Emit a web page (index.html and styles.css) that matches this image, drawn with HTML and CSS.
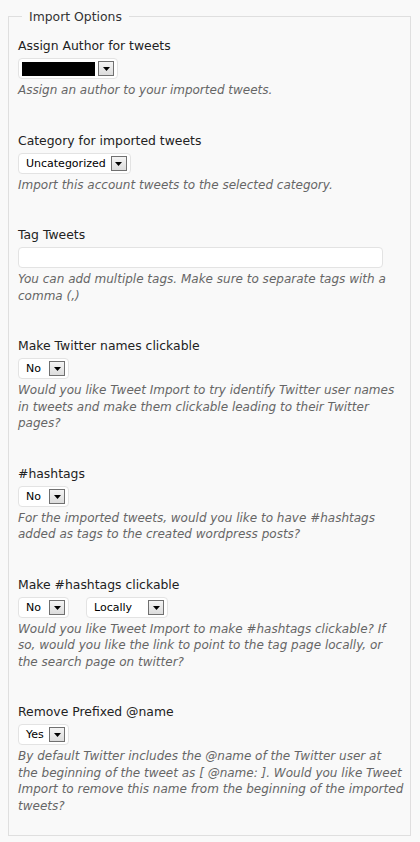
FILE: index.html
```html
<!DOCTYPE html>
<html lang="en">
<head>
  <meta charset="UTF-8" />
  <title>Tweet Import — Import Options</title>
  <meta name="viewport" content="width=device-width, initial-scale=1.0" />
  <link rel="stylesheet" href="styles.css">
</head>
<body>
  <fieldset class="options">
    <legend>Import Options</legend>

    <div class="option">
      <label>Assign Author for tweets</label>
      <div class="controls">
        <div class="select select-author">
          <span class="value redacted"></span>
          <span class="arrow"><svg width="7" height="4" viewBox="0 0 7 4"><path d="M0 0h7L3.5 4z" fill="#000"/></svg></span>
        </div>
      </div>
      <p class="desc">Assign an author to your imported tweets.</p>
    </div>

    <div class="option">
      <label>Category for imported tweets</label>
      <div class="controls">
        <div class="select">
          <span class="value">Uncategorized</span>
          <span class="arrow"><svg width="7" height="4" viewBox="0 0 7 4"><path d="M0 0h7L3.5 4z" fill="#000"/></svg></span>
        </div>
      </div>
      <p class="desc">Import this account tweets to the selected category.</p>
    </div>

    <div class="option">
      <label>Tag Tweets</label>
      <div class="controls">
        <input type="text" class="text-input" />
      </div>
      <p class="desc">You can add multiple tags. Make sure to separate tags with a comma (,)</p>
    </div>

    <div class="option">
      <label>Make Twitter names clickable</label>
      <div class="controls">
        <div class="select select-short">
          <span class="value">No</span>
          <span class="arrow"><svg width="7" height="4" viewBox="0 0 7 4"><path d="M0 0h7L3.5 4z" fill="#000"/></svg></span>
        </div>
      </div>
      <p class="desc">Would you like Tweet Import to try identify Twitter user names in tweets and make them clickable leading to their Twitter pages?</p>
    </div>

    <div class="option">
      <label>#hashtags</label>
      <div class="controls">
        <div class="select select-short">
          <span class="value">No</span>
          <span class="arrow"><svg width="7" height="4" viewBox="0 0 7 4"><path d="M0 0h7L3.5 4z" fill="#000"/></svg></span>
        </div>
      </div>
      <p class="desc">For the imported tweets, would you like to have #hashtags added as tags to the created wordpress posts?</p>
    </div>

    <div class="option">
      <label>Make #hashtags clickable</label>
      <div class="controls">
        <div class="select select-short">
          <span class="value">No</span>
          <span class="arrow"><svg width="7" height="4" viewBox="0 0 7 4"><path d="M0 0h7L3.5 4z" fill="#000"/></svg></span>
        </div>
        <div class="select select-where">
          <span class="value">Locally</span>
          <span class="arrow"><svg width="7" height="4" viewBox="0 0 7 4"><path d="M0 0h7L3.5 4z" fill="#000"/></svg></span>
        </div>
      </div>
      <p class="desc">Would you like Tweet Import to make #hashtags clickable? If so, would you like the link to point to the tag page locally, or the search page on twitter?</p>
    </div>

    <div class="option">
      <label>Remove Prefixed @name</label>
      <div class="controls">
        <div class="select select-short">
          <span class="value">Yes</span>
          <span class="arrow"><svg width="7" height="4" viewBox="0 0 7 4"><path d="M0 0h7L3.5 4z" fill="#000"/></svg></span>
        </div>
      </div>
      <p class="desc">By default Twitter includes the @name of the Twitter user at the beginning of the tweet as [ @name: ]. Would you like Tweet Import to remove this name from the beginning of the imported tweets?</p>
    </div>
  </fieldset>
</body>
</html>
```

FILE: styles.css
```css
body {
  margin: 8px;
  background: #f9f9f9;
  font-family: 'DejaVu Sans', Verdana, sans-serif;
  color: #333;
}
.options {
  margin: 0 1px 0 0;
  padding: 12px 6px 21px 9px;
  border: 1px solid #dfdfdf;
  min-width: 0;
}
.options legend {
  margin-left: 4px;
  padding: 0 7px;
  font-size: 12.4px;
  line-height: 17px;
  color: #333;
}
.option {
  margin-bottom: 33px;
}
.option:last-child {
  margin-bottom: 0;
}
.option label {
  display: block;
  font-size: 12.4px;
  line-height: 17px;
  color: #222;
}
.controls {
  display: flex;
  gap: 17px;
  margin-top: 4px;
}
.select {
  display: inline-flex;
  align-items: center;
  height: 21px;
  box-sizing: border-box;
  padding: 0 3px 0 7px;
  background: #fff;
  border: 1px solid #e3e3e3;
  border-radius: 4px;
  font-size: 11px;
  color: #000;
}
.select .value {
  flex: 1;
  padding-right: 5px;
}
.select-short {
  width: 51px;
}
.select-where {
  width: 82px;
}
.select-author {
  width: 100px;
  padding-left: 3px;
}
.redacted {
  height: 14px;
  background: #000;
  margin-right: 3px;
}
.arrow {
  display: flex;
  align-items: flex-end;
  justify-content: center;
  width: 16px;
  height: 15px;
  box-sizing: border-box;
  padding-bottom: 4px;
  border: 1px solid #707070;
  background: linear-gradient(#f4f4f4, #dcdcdc);
}
.text-input {
  width: 365px;
  height: 21px;
  box-sizing: border-box;
  margin: 0;
  border: 1px solid #e3e3e3;
  border-radius: 4px;
  background: #fff;
}
.desc {
  margin: 3px 0 0;
  font-size: 12px;
  line-height: 16.5px;
  font-style: italic;
  color: #666;
}
```
